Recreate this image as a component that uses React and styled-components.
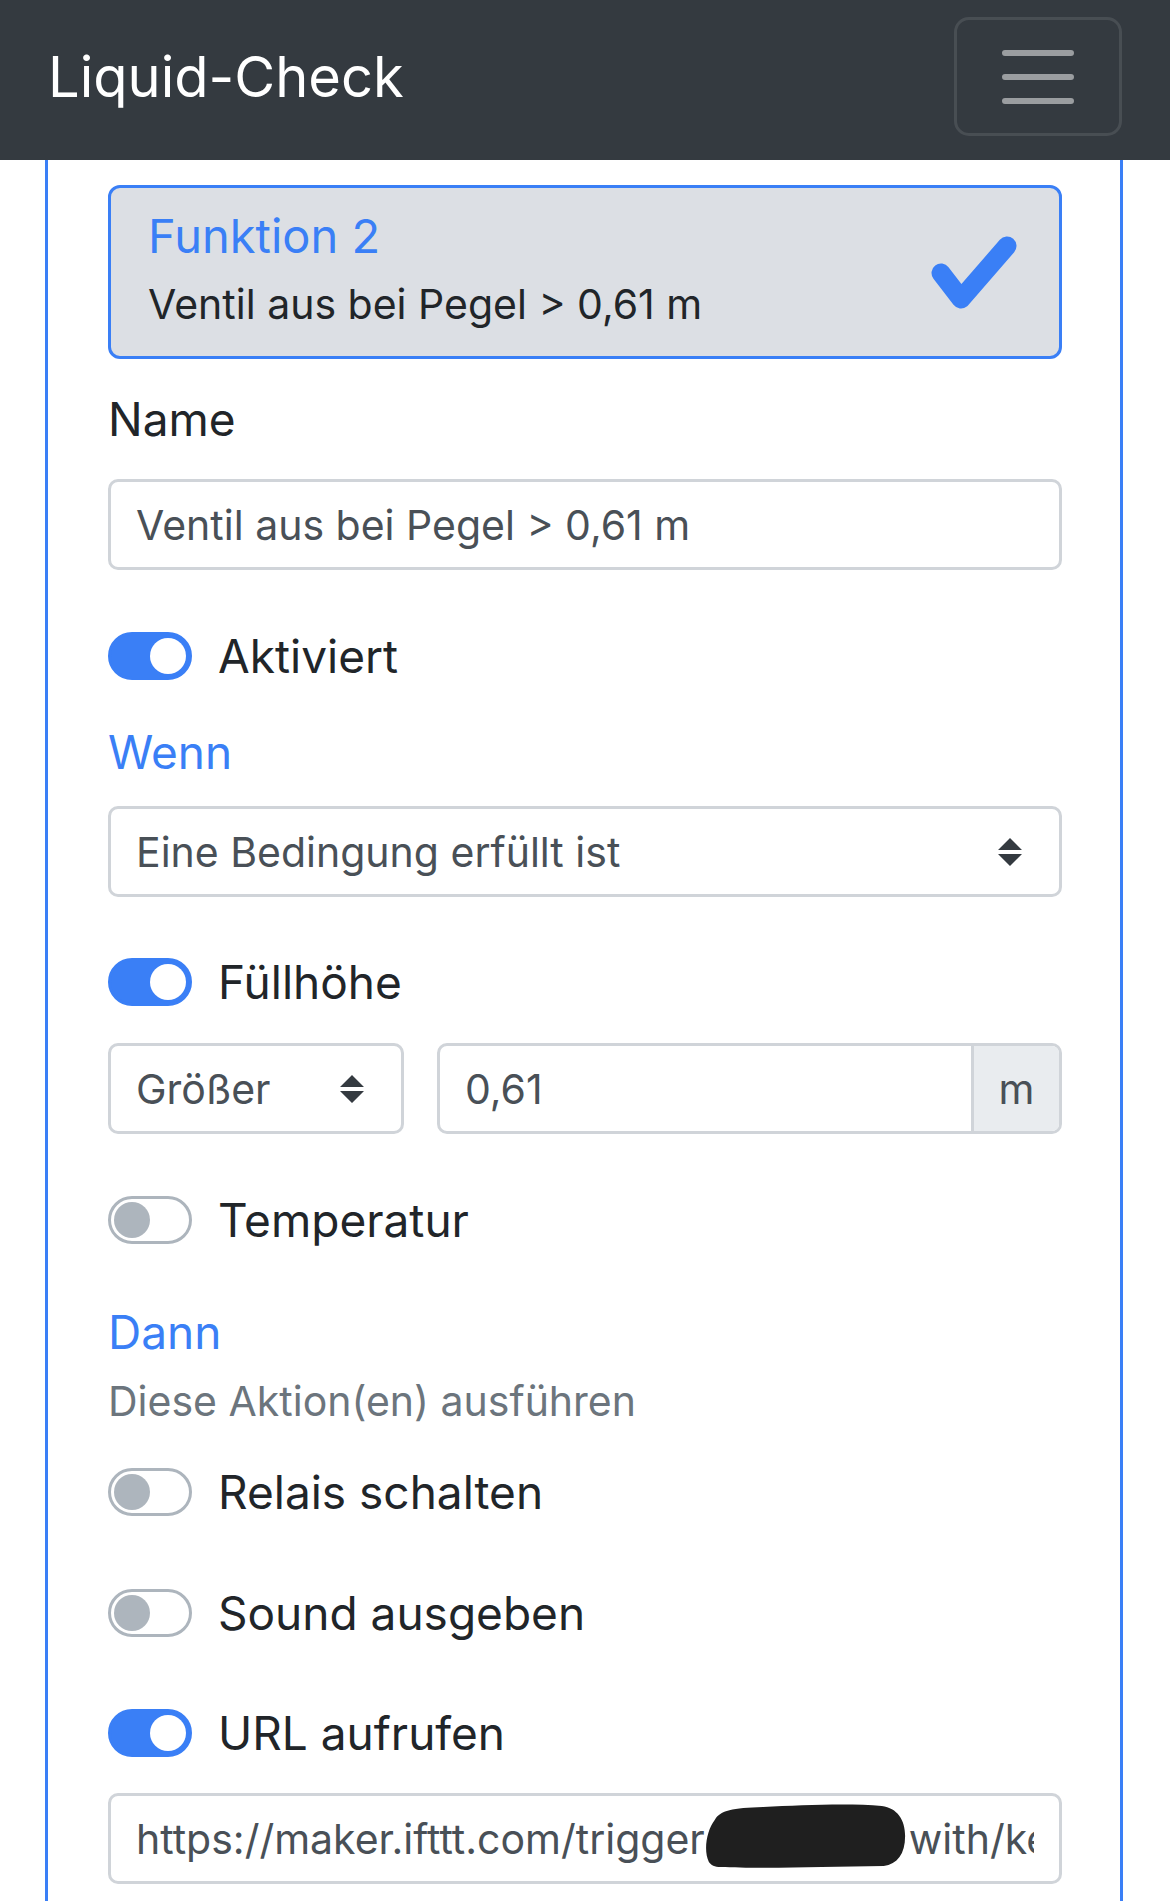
import React from 'react'
import styled, { createGlobalStyle } from 'styled-components'

const blue = '#3a7ff6'

const GlobalStyle = createGlobalStyle`
  body {
    margin: 0;
    background: #fff;
    font-family: Inter, "Liberation Sans", sans-serif;
    color: #212529;
  }
`

const Navbar = styled.nav`
  height: 160px;
  box-sizing: border-box;
  padding: 0 48px 7px;
  background: #343a40;
  display: flex;
  align-items: center;
  justify-content: space-between;
`

const Brand = styled.a`
  color: #fff;
  font-size: 56px;
  line-height: 1;
  text-decoration: none;
`

const Toggler = styled.button`
  width: 168px;
  height: 119px;
  padding: 0;
  border: 3px solid rgba(255, 255, 255, 0.1);
  border-radius: 15px;
  background: transparent;
  display: flex;
  align-items: center;
  justify-content: center;
`

const Frame = styled.main`
  margin-left: 45px;
  width: 1078px;
  box-sizing: border-box;
  border-left: 3px solid ${blue};
  border-right: 3px solid ${blue};
  padding: 25px 58px 80px 60px;
`

const ActiveItem = styled.div`
  box-sizing: border-box;
  height: 174px;
  padding: 18px 38px 0 37px;
  border: 3px solid ${blue};
  border-radius: 12px;
  background: #dcdfe4;
  display: flex;
  align-items: flex-start;
  justify-content: space-between;
`

const ItemTitle = styled.div`
  color: ${blue};
  font-size: 47px;
  line-height: 60px;
`

const ItemText = styled.div`
  margin-top: 13px;
  font-size: 41px;
  line-height: 50px;
`

const Check = styled.svg`
  margin-top: 27px;
  width: 100px;
  height: 80px;
`

const Label = styled.div`
  margin-top: ${p => p.$mt}px;
  font-size: 46px;
  line-height: 70px;
`

const SectionTitle = styled(Label)`
  color: ${blue};
`

const Hint = styled.div`
  margin-top: 6px;
  color: #6c757d;
  font-size: 41px;
  line-height: 56px;
`

const Field = styled.div`
  box-sizing: border-box;
  margin-top: ${p => p.$mt || 0}px;
  height: 91px;
  padding: 0 25px;
  border: 3px solid #d0d4d9;
  border-radius: 10px;
  background: #fff;
  color: #495057;
  font-size: 41px;
  display: flex;
  align-items: center;
  justify-content: space-between;
  overflow: hidden;
`

const Clip = styled.div`
  flex: 1;
  overflow: hidden;
  white-space: nowrap;
  line-height: 84px;
`

const SelectField = styled(Field)`
  padding-right: 36px;
`

const Arrows = styled.svg`
  width: 26px;
  height: 30px;
  flex: none;
`

const FormRow = styled.div`
  margin-top: 25px;
  display: grid;
  grid-template-columns: 296px 1fr;
  gap: 33px;
`

const InputGroup = styled.div`
  box-sizing: border-box;
  height: 91px;
  border: 3px solid #d0d4d9;
  border-radius: 10px;
  overflow: hidden;
  display: flex;
  color: #495057;
  font-size: 41px;
`

const GroupInput = styled.div`
  flex: 1;
  padding: 0 25px;
  display: flex;
  align-items: center;
`

const Addon = styled.div`
  width: 85px;
  border-left: 3px solid #d0d4d9;
  background: #e9ecef;
  display: flex;
  align-items: center;
  justify-content: center;
`

const SwitchRow = styled.div`
  margin-top: ${p => p.$mt}px;
  height: 72px;
  display: flex;
  align-items: center;
  gap: 26px;
  font-size: 46px;
`

const Track = styled.span`
  box-sizing: border-box;
  width: 84px;
  height: 48px;
  padding: 3px;
  border: 3px solid ${p => (p.$on ? blue : '#adb5bd')};
  border-radius: 24px;
  background: ${p => (p.$on ? blue : '#fff')};
  display: flex;
  align-items: center;
  justify-content: ${p => (p.$on ? 'flex-end' : 'flex-start')};
`

const Knob = styled.span`
  width: 36px;
  height: 36px;
  border-radius: 50%;
  background: ${p => (p.$on ? '#fff' : '#adb5bd')};
`

const Redact = styled.svg`
  width: 204px;
  height: 72px;
  margin-top: -30px;
  vertical-align: -18px;
`

function Switch({ on, children, mt }) {
  return (
    <SwitchRow $mt={mt}>
      <Track $on={on}>
        <Knob $on={on} />
      </Track>
      {children}
    </SwitchRow>
  )
}

function UpDown() {
  return (
    <Arrows viewBox="0 0 26 30">
      <path d="M13 1 L25 13 H1 Z M1 17 H25 L13 29 Z" fill="#343a40" />
    </Arrows>
  )
}

export default function App() {
  return (
    <>
      <GlobalStyle />
      <Navbar>
        <Brand href="#">Liquid-Check</Brand>
        <Toggler aria-label="Menü">
          <svg width="90" height="90" viewBox="0 0 30 30">
            <path
              d="M4 7h22M4 15h22M4 23h22"
              stroke="rgba(255,255,255,0.5)"
              strokeWidth="2"
              strokeLinecap="round"
            />
          </svg>
        </Toggler>
      </Navbar>

      <Frame>
        {/* selected function */}
        <ActiveItem>
          <div>
            <ItemTitle>Funktion 2</ItemTitle>
            <ItemText>Ventil aus bei Pegel &gt; 0,61 m</ItemText>
          </div>
          <Check viewBox="0 0 100 80">
            <path
              d="M20 40 L40 66 L86 13"
              fill="none"
              stroke={blue}
              strokeWidth="19"
              strokeLinecap="round"
              strokeLinejoin="round"
            />
          </Check>
        </ActiveItem>

        <Label $mt={25}>Name</Label>
        <Field $mt={25}>Ventil aus bei Pegel &gt; 0,61 m</Field>

        <Switch on mt={50}>Aktiviert</Switch>

        {/* conditions */}
        <SectionTitle $mt={25}>Wenn</SectionTitle>
        <SelectField $mt={19}>
          <span>Eine Bedingung erfüllt ist</span>
          <UpDown />
        </SelectField>

        <Switch on mt={49}>Füllhöhe</Switch>
        <FormRow>
          <SelectField>
            <span>Größer</span>
            <UpDown />
          </SelectField>
          <InputGroup>
            <GroupInput>0,61</GroupInput>
            <Addon>m</Addon>
          </InputGroup>
        </FormRow>

        <Switch mt={50}>Temperatur</Switch>

        {/* actions */}
        <SectionTitle $mt={41}>Dann</SectionTitle>
        <Hint>Diese Aktion(en) ausführen</Hint>

        <Switch mt={27}>Relais schalten</Switch>
        <Switch mt={49}>Sound ausgeben</Switch>
        <Switch on mt={48}>URL aufrufen</Switch>

        <Field $mt={24}>
          <Clip>
            https://maker.ifttt.com/trigger
            <Redact viewBox="0 0 210 72" preserveAspectRatio="none">
              <path
                d="M4 62 C-2 50 2 30 10 20 C16 10 28 8 60 7 C100 5 150 3 182 6 C198 8 206 20 206 36 C206 54 198 64 184 66 L120 67 C80 68 40 68 16 67 C10 67 6 65 4 62 Z"
                fill="#1f1f1f"
              />
            </Redact>
            with/key/dL4x9qTz
          </Clip>
        </Field>
      </Frame>
    </>
  )
}
